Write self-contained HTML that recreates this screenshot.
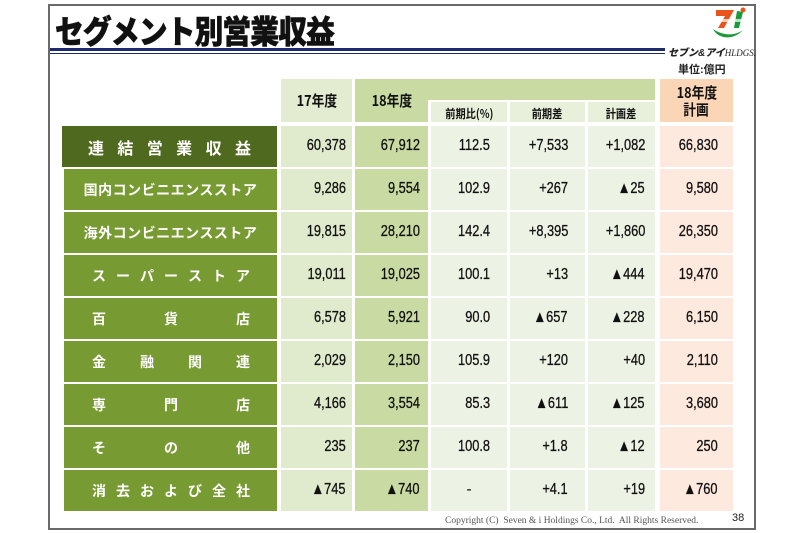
<!DOCTYPE html>
<html><head><meta charset="utf-8"><style>
*{margin:0;padding:0;box-sizing:border-box}
body{width:800px;height:533px;background:#fff;position:relative;overflow:hidden;font-family:"Liberation Sans","Noto Sans CJK JP",sans-serif}
.frame{position:absolute;left:48px;top:4px;width:708px;height:526px;border:2px solid #6a6a6a}
.title{position:absolute;left:55px;top:7px;font-size:32px;font-weight:900;letter-spacing:-1px;color:#111;font-family:"Noto Sans CJK JP",sans-serif;-webkit-text-stroke:0.6px #111;transform:scaleX(.9);transform-origin:left top;white-space:nowrap}
.l1{position:absolute;left:50px;top:48px;width:615px;height:3px;background:#1d2a6e}
.l2{position:absolute;left:50px;top:53px;width:615px;height:1px;background:#1d2a6e}
.c{position:absolute;display:flex;align-items:center;justify-content:center;font-size:15px;font-weight:bold;color:#111;font-family:"Noto Sans CJK JP",sans-serif}
.c span{display:inline-block;transform:scaleX(.85)}
.n{position:absolute;font-size:16px;color:#111;text-align:right}
.n span{display:inline-block;transform:scaleX(.8);transform-origin:right center;-webkit-text-stroke:0.3px #111}
.lab{position:absolute;display:flex;align-items:center;color:#fff;font-weight:bold;font-size:14px;font-family:"Noto Sans CJK JP",sans-serif}
</style></head><body>
<div class="frame"></div>
<div class="title">セグメント別営業収益</div>
<div class="l1"></div><div class="l2"></div>
<svg style="position:absolute;left:710px;top:7px" width="40" height="34" viewBox="0 0 40 34">
<path d="M6 3h18l-10 18h-6l7-12H6z" fill="#e8541c"/>
<path d="M27 4l6 1-4 16h-5z" fill="#1a9a3a"/>
<circle cx="33" cy="3" r="2.5" fill="#e8541c"/>
<path d="M3 22c5 10 20 12 30 1c-8 6-20 6-30-1z" fill="#1a9a3a"/>
<rect x="2" y="12" width="36" height="3" fill="#fff" opacity=".7"/>
</svg>
<div style="position:absolute;left:668px;top:44px;font-size:10px;font-weight:900;font-style:italic;color:#222;white-space:nowrap">セブン&amp;アイ<span style="font-family:'Liberation Serif';font-weight:normal;font-size:9px">HLDGS.</span></div>
<div style="position:absolute;left:678px;top:61px;font-size:11px;font-weight:bold;color:#222">単位:億円</div>

<div class="c" style="left:281px;top:79px;width:71px;height:43px;background:#e3ecd0"><span>17年度</span></div>
<div class="c" style="left:355px;top:79px;width:300px;height:21px;background:#c9dba3"></div>
<div class="c" style="left:355px;top:79px;width:73px;height:43px;background:#c9dba3"><span>18年度</span></div>
<div class="c" style="left:431px;top:102px;width:76px;height:20px;background:#e8f0dc;font-size:12px;padding-top:2px"><span>前期比(%)</span></div>
<div class="c" style="left:510px;top:102px;width:75px;height:20px;background:#e8f0dc;font-size:12px;padding-top:2px"><span>前期差</span></div>
<div class="c" style="left:588px;top:102px;width:67px;height:20px;background:#e8f0dc;font-size:12px;padding-top:2px"><span>計画差</span></div>
<div class="c" style="left:660px;top:79px;width:73px;height:43px;background:#fbd6b6;flex-direction:column;line-height:17px"><span>18年度</span><span>計画</span></div>

<div id="rows"></div>
<script>
var rows=[["連結営業収益","60,378","67,912","112.5","+7,533","+1,082","66,830"],
["国内コンビニエンスストア","9,286","9,554","102.9","+267","▲25","9,580"],
["海外コンビニエンスストア","19,815","28,210","142.4","+8,395","+1,860","26,350"],
["スーパーストア","19,011","19,025","100.1","+13","▲444","19,470"],
["百貨店","6,578","5,921","90.0","▲657","▲228","6,150"],
["金融関連","2,029","2,150","105.9","+120","+40","2,110"],
["専門店","4,166","3,554","85.3","▲611","▲125","3,680"],
["その他","235","237","100.8","+1.8","▲12","250"],
["消去および全社","▲745","▲740","-","+4.1","+19","▲760"]];
var cols=[[281,71,"#e0eacc",346],[355,73,"#c9dba3",420],[431,76,"#edf3e4",490],[510,75,"#edf3e4",568],[588,67,"#edf3e4",645],[660,73,"#fde9dd",718]];
var h="";
rows.forEach(function(r,i){
 var top=126+i*43, ht=41;
 var txt=r[0], inner;
 if(i==1||i==2){inner='<div style="width:100%;text-align:center;letter-spacing:0.5px">'+txt+'</div>';}
 else{inner='<div style="width:100%;display:flex;justify-content:space-between;padding:0 '+(i==0?26:27)+'px 0 '+(i==0?26:28)+'px">'+txt.split('').map(function(ch){return '<span>'+ch+'</span>'}).join('')+'</div>';}
 if(i==0){h+='<div class="lab" style="left:62px;top:'+top+'px;width:215px;height:'+ht+'px;background:#4f6a1f;font-size:16px">'+inner+'</div>';}
 else h+='<div class="lab" style="left:64px;top:'+top+'px;width:213px;height:'+ht+'px;background:#789a32">'+inner+'</div>';
 cols.forEach(function(c,j){
  h+='<div style="position:absolute;left:'+c[0]+'px;top:'+top+'px;width:'+c[1]+'px;height:'+ht+'px;background:'+c[2]+'"></div>';
  var v=r[j+1]; var right=800-c[3];
  if(v=="-"){h+='<div class="n" style="left:'+c[0]+'px;width:'+c[1]+'px;text-align:center;top:'+(top+11)+'px">-</div>';}
  else h+='<div class="n" style="right:'+right+'px;top:'+(top+11)+'px"><span>'+v+'</span></div>';
 });
});
document.getElementById("rows").innerHTML=h;
</script>
<div style="position:absolute;left:445px;top:516px;font-family:'Liberation Serif',serif;font-size:9.5px;color:#555;white-space:nowrap">Copyright (C)&nbsp; Seven &amp; i Holdings Co., Ltd.&nbsp; All Rights Reserved.</div>
<div style="position:absolute;left:732px;top:512px;font-size:11px;color:#222">38</div>
</body></html>
